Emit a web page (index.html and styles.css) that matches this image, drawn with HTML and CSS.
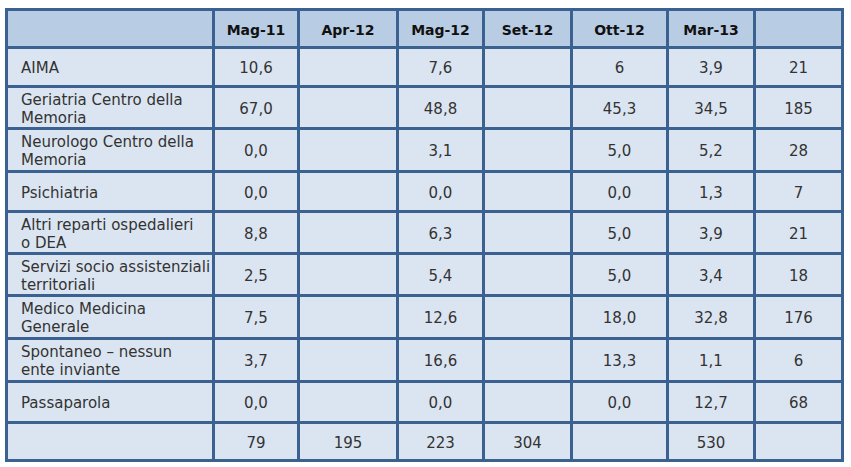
FILE: index.html
```
<!DOCTYPE html>
<html lang="it">
<head>
<meta charset="utf-8">
<link rel="stylesheet" href="styles.css">
</head>
<body>
<div class="tbl">
  <div class="cell head"></div>
  <div class="cell head num">Mag-11</div>
  <div class="cell head num">Apr-12</div>
  <div class="cell head num">Mag-12</div>
  <div class="cell head num">Set-12</div>
  <div class="cell head num">Ott-12</div>
  <div class="cell head num">Mar-13</div>
  <div class="cell head num"></div>

  <div class="cell lbl">AIMA</div>
  <div class="cell num">10,6</div><div class="cell num"></div><div class="cell num">7,6</div><div class="cell num"></div><div class="cell num">6</div><div class="cell num">3,9</div><div class="cell num">21</div>

  <div class="cell lbl">Geriatria Centro della<br>Memoria</div>
  <div class="cell num">67,0</div><div class="cell num"></div><div class="cell num">48,8</div><div class="cell num"></div><div class="cell num">45,3</div><div class="cell num">34,5</div><div class="cell num">185</div>

  <div class="cell lbl">Neurologo Centro della<br>Memoria</div>
  <div class="cell num">0,0</div><div class="cell num"></div><div class="cell num">3,1</div><div class="cell num"></div><div class="cell num">5,0</div><div class="cell num">5,2</div><div class="cell num">28</div>

  <div class="cell lbl">Psichiatria</div>
  <div class="cell num">0,0</div><div class="cell num"></div><div class="cell num">0,0</div><div class="cell num"></div><div class="cell num">0,0</div><div class="cell num">1,3</div><div class="cell num">7</div>

  <div class="cell lbl">Altri reparti ospedalieri<br>o DEA</div>
  <div class="cell num">8,8</div><div class="cell num"></div><div class="cell num">6,3</div><div class="cell num"></div><div class="cell num">5,0</div><div class="cell num">3,9</div><div class="cell num">21</div>

  <div class="cell lbl">Servizi socio assistenziali<br>territoriali</div>
  <div class="cell num">2,5</div><div class="cell num"></div><div class="cell num">5,4</div><div class="cell num"></div><div class="cell num">5,0</div><div class="cell num">3,4</div><div class="cell num">18</div>

  <div class="cell lbl">Medico Medicina<br>Generale</div>
  <div class="cell num">7,5</div><div class="cell num"></div><div class="cell num">12,6</div><div class="cell num"></div><div class="cell num">18,0</div><div class="cell num">32,8</div><div class="cell num">176</div>

  <div class="cell lbl">Spontaneo – nessun<br>ente inviante</div>
  <div class="cell num">3,7</div><div class="cell num"></div><div class="cell num">16,6</div><div class="cell num"></div><div class="cell num">13,3</div><div class="cell num">1,1</div><div class="cell num">6</div>

  <div class="cell lbl">Passaparola</div>
  <div class="cell num">0,0</div><div class="cell num"></div><div class="cell num">0,0</div><div class="cell num"></div><div class="cell num">0,0</div><div class="cell num">12,7</div><div class="cell num">68</div>

  <div class="cell lbl"></div>
  <div class="cell num">79</div><div class="cell num">195</div><div class="cell num">223</div><div class="cell num">304</div><div class="cell num"></div><div class="cell num">530</div><div class="cell num"></div>
</div>
</body>
</html>
```
FILE: styles.css
```
html, body {
  margin: 0;
  padding: 0;
  background: #ffffff;
}
body {
  padding: 8px 0 0 5px;
  font-family: "DejaVu Sans", sans-serif;
  font-size: 15px;
  color: #333333;
}
.tbl {
  display: grid;
  grid-template-columns: 207px 85px 99px 86px 88px 96px 87px 88px;
  grid-template-rows: 38px 39px 42px 43px 40px 42px 42px 43px 43px 41px 38px;
  width: max-content;
  border-left: 3px solid #3b6190;
  border-top: 3px solid #3b6190;
}
.cell {
  box-sizing: border-box;
  border-right: 3px solid #3b6190;
  border-bottom: 3px solid #3b6190;
  background: #dbe5f1;
  display: flex;
  align-items: center;
  line-height: 18px;
  padding-top: 2px;
}
.head {
  background: #b8cce4;
  font-weight: bold;
  font-size: 14px;
  color: #111111;
}
.num {
  justify-content: center;
  text-align: center;
}
.lbl {
  padding-left: 13px;
  white-space: nowrap;
  overflow: hidden;
}
```
